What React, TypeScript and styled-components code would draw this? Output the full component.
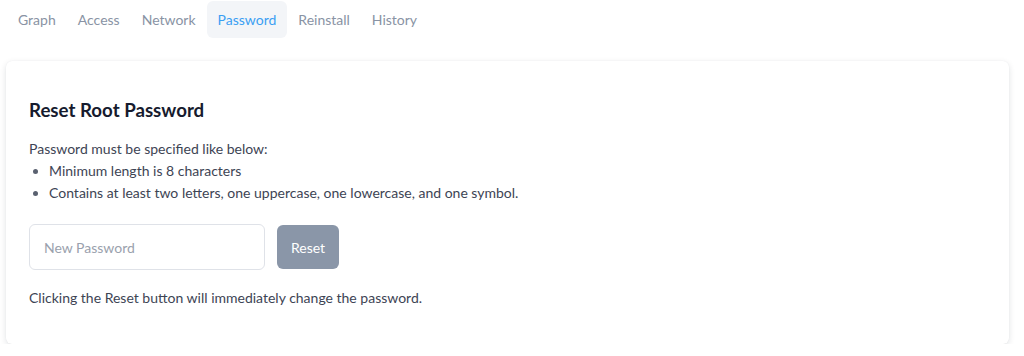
import { useState } from 'react';
import styled, { createGlobalStyle } from 'styled-components';

const tabs = ['Graph', 'Access', 'Network', 'Password', 'Reinstall', 'History'];

export default function App() {
  const [active, setActive] = useState('Password');
  const [password, setPassword] = useState('');

  return (
    <>
      <GlobalStyle />
      <Page>
        <TabBar>
          {tabs.map((t) => (
            <Tab key={t} $active={t === active} onClick={() => setActive(t)}>
              {t}
            </Tab>
          ))}
        </TabBar>
        <Card>
          <Title>Reset Root Password</Title>
          <Text>Password must be specified like below:</Text>
          <Rules>
            <li>Minimum length is 8 characters</li>
            <li>Contains at least two letters, one uppercase, one lowercase, and one symbol.</li>
          </Rules>
          <FormRow>
            <PasswordInput
              type="password"
              placeholder="New Password"
              value={password}
              onChange={(e) => setPassword(e.target.value)}
            />
            <ResetButton disabled={password.length < 8}>Reset</ResetButton>
          </FormRow>
          <Text>Clicking the Reset button will immediately change the password.</Text>
        </Card>
      </Page>
    </>
  );
}

const GlobalStyle = createGlobalStyle`
  body {
    margin: 0;
    background: #ffffff;
    font-family: Lato, "Open Sans", sans-serif;
  }
`;

const Page = styled.div`
  padding: 1px 15px 0 6px;
`;

const TabBar = styled.div`
  display: flex;
  padding-left: 1px;
  margin-bottom: 23px;
`;

const Tab = styled.div<{ $active?: boolean }>`
  display: flex;
  align-items: center;
  height: 37px;
  padding: 0 11px;
  border-radius: 6px;
  font-size: 14px;
  color: ${(p) => (p.$active ? '#3b9ff3' : '#8993a4')};
  background: ${(p) => (p.$active ? '#f3f5f8' : 'transparent')};
  cursor: pointer;
`;

const Card = styled.div`
  background: #ffffff;
  border-radius: 6px;
  box-shadow: 0 2px 6px rgba(20, 30, 50, 0.12), 0 0 1px rgba(20, 30, 50, 0.08);
  padding: 37px 23px 35px;
`;

const Title = styled.h2`
  margin: 0 0 16px;
  font-size: 18.7px;
  line-height: 24px;
  font-weight: 700;
  color: #161b2e;
`;

const Text = styled.p`
  margin: 0;
  font-size: 14px;
  line-height: 22px;
  color: #3d4454;
`;

const Rules = styled.ul`
  margin: 0;
  padding-left: 20px;
  font-size: 14px;
  line-height: 22px;
  color: #3d4454;

  li::marker {
    color: #5a6170;
  }
`;

const FormRow = styled.div`
  display: flex;
  align-items: center;
  gap: 12px;
  margin: 20px 0 17px;
`;

const PasswordInput = styled.input`
  width: 236px;
  height: 46px;
  box-sizing: border-box;
  padding: 0 14px;
  border: 1px solid #dfe2e8;
  border-radius: 6px;
  font-family: inherit;
  font-size: 14px;
  color: #3d4454;

  &::placeholder {
    color: #9aa1ad;
  }
  &:focus {
    outline: none;
    border-color: #3b9ff3;
  }
`;

const ResetButton = styled.button`
  height: 44px;
  padding: 0 14px;
  border: none;
  border-radius: 6px;
  background: #8a96a8;
  color: #ffffff;
  font-family: inherit;
  font-size: 14px;
  cursor: pointer;

  &:disabled {
    cursor: default;
  }
`;
